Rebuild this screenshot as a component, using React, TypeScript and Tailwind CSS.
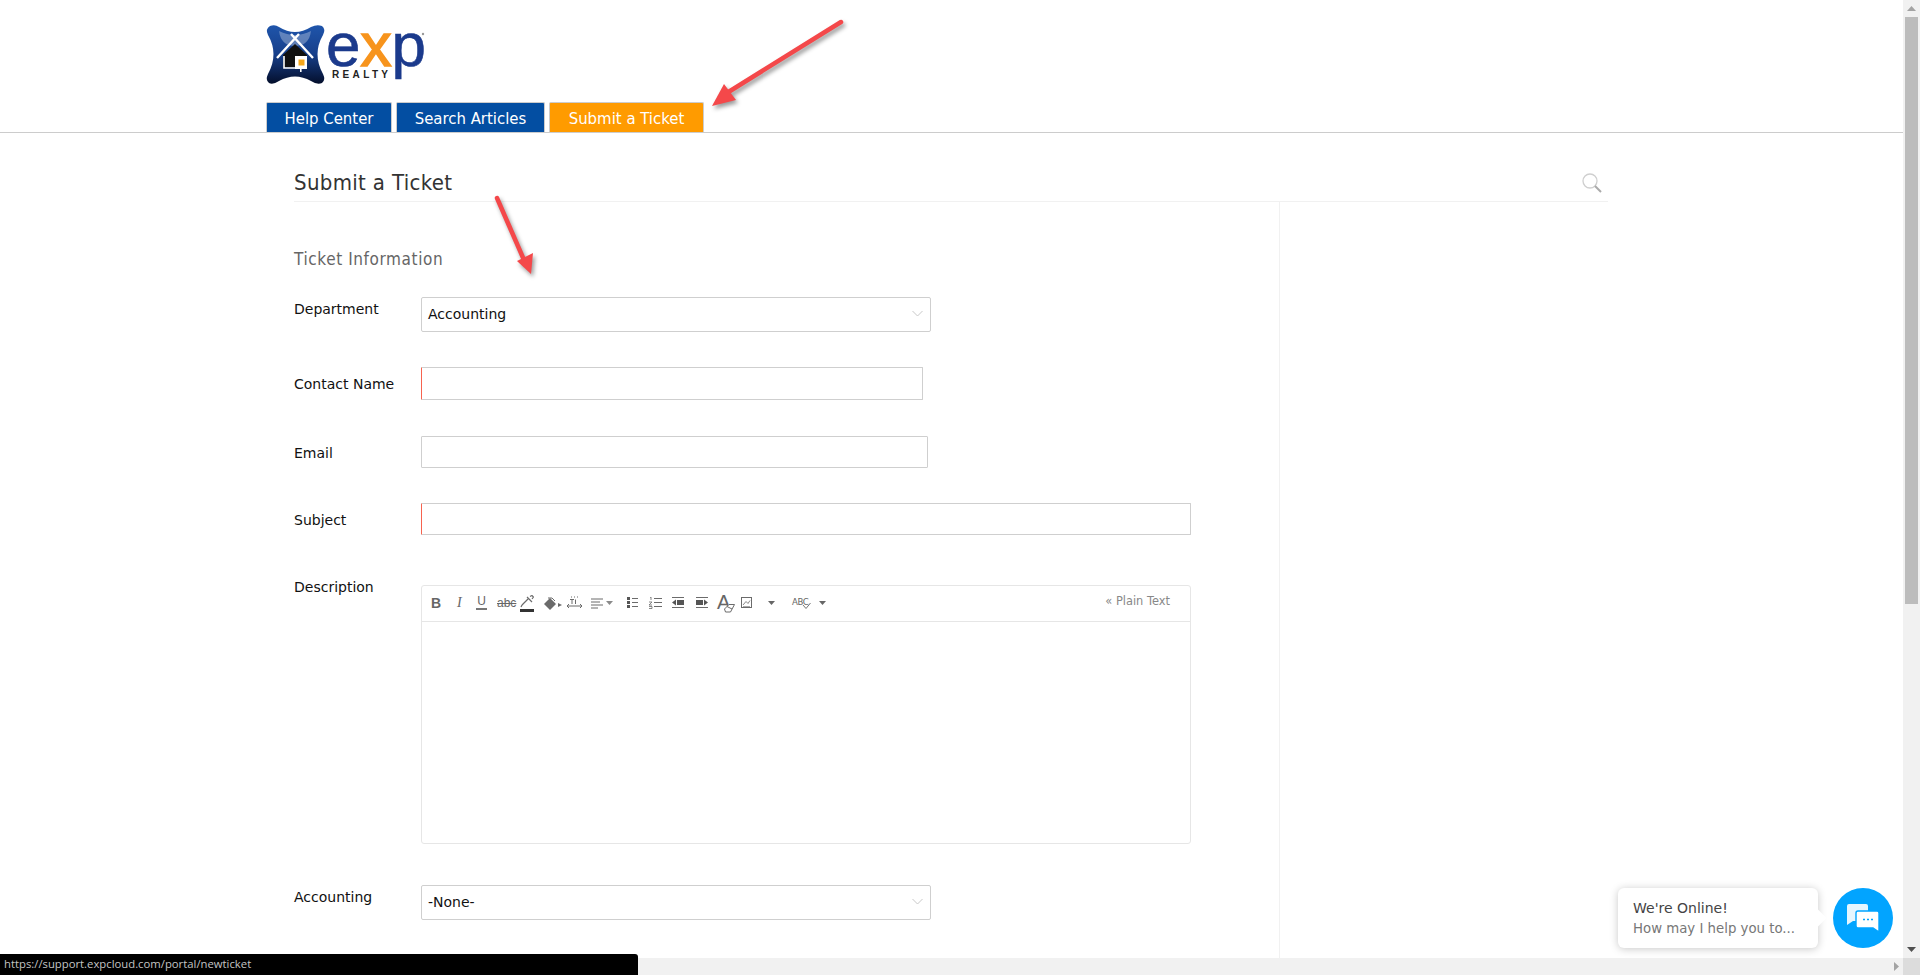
import React from "react";

const sans = "font-['DejaVu_Sans',Verdana,sans-serif]";
const cond = "font-['DejaVu_Sans_Condensed','DejaVu_Sans',sans-serif]";

function Logo() {
  return (
    <svg width="162" height="62" viewBox="0 0 162 62" className="block overflow-visible">
      <defs>
        <linearGradient id="lg" x1="0" y1="0" x2="0" y2="1">
          <stop offset="0" stopColor="#1f55ab" />
          <stop offset="0.5" stopColor="#173f8a" />
          <stop offset="1" stopColor="#040f2c" />
        </linearGradient>
      </defs>
      <path
        d="M5 2Q10 0 14 3Q30 13 46 3Q52 0 57 2Q61 5 58 11Q47 30 58 50Q61 56 57 59Q52 61 46 57Q30 48 14 57Q8 61 4 59Q0 56 3 50Q14 30 3 11Q0 5 5 2Z"
        fill="url(#lg)"
      />
      <path d="M14 7Q30 15 46 7Q44 22 30 22Q16 22 14 7Z" fill="#fff" opacity="0.3" />
      <path d="M18 31L30 20L42 31V43H18Z" fill="#111" />
      <path d="M12 34L34 10M48 34L26 10" stroke="#fff" strokeWidth="2.4" fill="none" />
      <path d="M19 32V44H41V32" stroke="#fff" strokeWidth="1.6" fill="none" />
      <rect x="30" y="32" width="12" height="13" fill="#fff" />
      <rect x="33.5" y="35.5" width="6" height="6" fill="#f5a71c" />
      <rect x="35" y="44" width="1.6" height="4" fill="#fff" />
      <text
        x="61"
        y="42"
        fontSize="62"
        fontFamily="'Liberation Sans',sans-serif"
        fill="#1b3a8c"
        stroke="#1b3a8c"
        strokeWidth="0.6"
      >
        e<tspan fill="#f7941d" stroke="#f7941d" strokeWidth="1.6">x</tspan>p
      </text>
      <text
        x="67"
        y="54"
        fontSize="10"
        fontWeight="700"
        fontFamily="'Liberation Sans',sans-serif"
        fill="#222"
        textLength="56"
        lengthAdjust="spacing"
      >
        REALTY
      </text>
      <circle cx="158" cy="10" r="1.2" fill="#999" />
    </svg>
  );
}

function Tab({ label, w, active }: { label: string; w: string; active?: boolean }) {
  return (
    <div
      className={`${w} h-[30px] pt-[3px] border border-b-0 border-[#ccc] rounded-t-[2px] flex items-center justify-center text-white text-[16.6px] ${cond} ${
        active ? "bg-[#ff9b00]" : "bg-[#034ea2]"
      }`}
    >
      {label}
    </div>
  );
}

function Chevron() {
  return (
    <svg width="11" height="7" viewBox="0 0 11 7" fill="none" className="mr-[6px] mb-[2px]">
      <path d="M.5 1L5.5 6L10.5 1" stroke="#c8c8c8" strokeWidth="1" />
    </svg>
  );
}

function SelectBox({ value, w }: { value: string; w: string }) {
  return (
    <div
      className={`${w} h-[35px] border border-[#cfcfcf] rounded-[2px] flex items-center justify-between pl-[6px] pr-[1px] text-[14px] text-[#111]`}
    >
      <span>{value}</span>
      <Chevron />
    </div>
  );
}

function TextBox({ w, h, required }: { w: string; h: string; required?: boolean }) {
  return (
    <input
      type="text"
      className={`${w} ${h} block border border-[#cfcfcf] rounded-[1px] bg-white ${required ? "border-l-[#f7634f]" : ""}`}
    />
  );
}

function Row({ label, pad, mt, children }: { label: string; pad: string; mt: string; children: React.ReactNode }) {
  return (
    <div className={`flex ${mt}`}>
      <div className={`w-[127px] shrink-0 ${pad} text-[14px] leading-[16px] text-[#111]`}>{label}</div>
      {children}
    </div>
  );
}

const ic = "#6b6b6b";

function Toolbar() {
  return (
    <div className="h-[36px] border-b border-[#e6e6e6] flex items-center pl-[9px] pb-[2px] shrink-0">
      <span className="w-[9px] text-[14px] leading-none font-bold text-[#666] font-['Liberation_Sans',sans-serif]">B</span>
      <span className="ml-[17px] w-[7px] text-[14px] leading-none italic text-[#666] font-['Liberation_Serif',serif]">I</span>
      <span className="ml-[12px] w-[11px] text-center text-[12px] leading-[13px] border-b-2 border-[#777] text-[#666] font-['Liberation_Sans',sans-serif] mb-[1px]">U</span>
      <span className="ml-[10px] w-[18px] text-center text-[12px] leading-none line-through text-[#666] font-['Liberation_Sans',sans-serif]">abc</span>
      <svg className="ml-[5px] mt-[2px]" width="14" height="17" viewBox="0 0 14 17" fill="none">
        <path d="M2 10L8 4M7 2L12 7M10 1.5L12 .5L13.5 2L12 4M2 10L1 12" stroke={ic} strokeWidth="1.2" />
        <rect x="0" y="14" width="14" height="3" fill="#333" />
      </svg>
      <svg className="ml-[9px] mt-[3px]" width="19" height="14" viewBox="0 0 19 14">
        <path d="M7 1L13 7L7 13L1 7Z" fill={ic} />
        <path d="M5 1L9 1L12 4" stroke={ic} fill="none" />
        <path d="M15 6L19 8L15 10Z" fill={ic} />
      </svg>
      <svg className="ml-[4px]" width="17" height="13" viewBox="0 0 17 13" fill="none">
        <path d="M1 10H16M3 8L1 10L3 12M14 8L16 10L14 12" stroke={ic} />
        <path d="M4 3.5H8M6 3.5V8M9.5 3.5V8M5 1H6M8 1H9M11 1H12" stroke={ic} />
      </svg>
      <svg className="ml-[8px] mt-[2px]" width="22" height="11" viewBox="0 0 22 11" fill="none">
        <path d="M0 1H12M0 4H9M0 7H12M0 10H7" stroke={ic} />
        <path d="M15 3H22L18.5 7Z" fill="#8a8a8a" />
      </svg>
      <svg className="ml-[14px]" width="11" height="11" viewBox="0 0 11 11" fill="none">
        <path d="M0 1.5H3M0 5.5H3M0 9.5H3" stroke="#555" strokeWidth="3" />
        <path d="M5 1.5H11M5 5.5H11M5 9.5H11" stroke={ic} />
      </svg>
      <svg className="ml-[11px]" width="13" height="12" viewBox="0 0 13 12" fill="none">
        <path d="M1 .5L2 0V3M0 5H3L0 8H3M0 9.5H3V11.5H0" stroke={ic} strokeWidth=".8" />
        <path d="M5 1.5H13M5 5.5H13M5 9.5H13" stroke={ic} />
      </svg>
      <svg className="ml-[10px]" width="12" height="11" viewBox="0 0 12 11">
        <path d="M0 .5H12M0 10.5H12" stroke={ic} />
        <rect x="5" y="3" width="7" height="5" fill="#555" />
        <path d="M4 2.5V8.5L0 5.5Z" fill="#555" />
      </svg>
      <svg className="ml-[12px]" width="12" height="11" viewBox="0 0 12 11">
        <path d="M0 .5H12M0 10.5H12" stroke={ic} />
        <rect x="0" y="3" width="7" height="5" fill="#555" />
        <path d="M8 2.5V8.5L12 5.5Z" fill="#555" />
      </svg>
      <span className="ml-[9px] w-[18px] h-[19px] relative mt-[1px]">
        <span className="absolute left-0 top-[-2px] text-[20px] leading-none text-[#666] font-['Liberation_Sans',sans-serif]">A</span>
        <svg className="absolute right-0 bottom-0" width="11" height="10" viewBox="0 0 11 10" fill="none">
          <path d="M.5 6L5 1.5H10.5L6.5 9H1.5Z" fill="#fff" stroke={ic} />
          <path d="M3 3.5L8 6" stroke={ic} />
        </svg>
      </span>
      <svg className="ml-[6px]" width="11" height="11" viewBox="0 0 11 11" fill="none">
        <rect x=".5" y=".5" width="10" height="10" stroke={ic} />
        <path d="M2 8L5 4.5L7 6.5L9 3.5" stroke={ic} strokeWidth=".8" />
        <path d="M2 9.5H9" stroke="#aaa" />
      </svg>
      <svg className="ml-[16px]" width="7" height="4" viewBox="0 0 7 4">
        <path d="M0 0H7L3.5 4Z" fill="#666" />
      </svg>
      <span className="ml-[17px] w-[21px] h-[14px] relative">
        <span className="absolute left-0 top-[1px] text-[9.5px] leading-none text-[#666] tracking-[-0.4px] font-['DejaVu_Sans_Condensed','DejaVu_Sans',sans-serif]">ABC</span>
        <svg className="absolute left-[10px] top-[6px]" width="9" height="8" viewBox="0 0 9 8" fill="none">
          <path d="M1 3L4 6.5L8.5 1" stroke="#777" />
        </svg>
      </span>
      <svg className="ml-[6px]" width="7" height="4" viewBox="0 0 7 4">
        <path d="M0 0H7L3.5 4Z" fill="#666" />
      </svg>
      <span className="ml-auto mr-[20px] mb-[1px] text-[11.4px] leading-none text-[#888]">« Plain Text</span>
    </div>
  );
}

function ScrollArrow({ d, w, h, c = "#666" }: { d: string; w: number; h: number; c?: string }) {
  return (
    <svg width={w} height={h} viewBox={`0 0 ${w} ${h}`}>
      <path d={d} fill={c} />
    </svg>
  );
}

function Arrows() {
  return (
    <svg className="absolute left-0 top-0 pointer-events-none drop-shadow-[2px_3px_2px_rgba(0,0,0,0.4)]" width="900" height="300" viewBox="0 0 900 300" fill="none">
      <path d="M841 22L722 96" stroke="#f4484a" strokeWidth="4.5" strokeLinecap="round" />
      <path d="M712 106L724 84L736 100Z" fill="#f4484a" />
      <path d="M497 198L524 260" stroke="#f4484a" strokeWidth="4.5" strokeLinecap="round" />
      <path d="M531 274L517 261L533 253Z" fill="#f4484a" />
    </svg>
  );
}

function Chat() {
  return (
    <div className="absolute left-[1618px] top-[888px] flex items-center gap-[15px]">
      <div className="relative w-[200px] h-[60px] bg-white rounded-[6px] shadow-[0_1px_8px_rgba(0,0,0,0.22)] pl-[15px] flex flex-col">
        <div className="absolute right-[-6px] top-[24px] w-[12px] h-[12px] bg-white rotate-45" />
        <span className="mt-[11px] text-[14px] leading-[18px] text-[#444]">We're Online!</span>
        <span className="mt-[3px] text-[13.3px] leading-[18px] text-[#777]">How may I help you to...</span>
      </div>
      <div className="w-[60px] h-[60px] rounded-full bg-[#02a4ff] flex items-center justify-center">
        <svg width="32" height="28" viewBox="0 0 32 28">
          <path d="M2 0H19Q21 0 21 2V17H6L0 21V2Q0 0 2 0Z" fill="#fff" opacity="0.9" />
          <path d="M11 7H30Q32 7 32 9V23V28L26 24H11Q9 24 9 22V9Q9 7 11 7Z" fill="#fff" stroke="#02a4ff" strokeWidth="1.4" />
          <path d="M16 15.5H18M20 15.5H22M24 15.5H26" stroke="#02a4ff" strokeWidth="1.4" />
        </svg>
      </div>
    </div>
  );
}

export default function App() {
  return (
    <div className={`relative w-full h-[975px] overflow-hidden bg-white flex ${sans}`}>
      <div className="flex-1 min-w-0 flex flex-col">
        <div className="flex-1 min-h-0 overflow-hidden flex flex-col">
          <header className="h-[133px] shrink-0 border-b border-[#ccc] pl-[266px] flex flex-col">
            <div className="mt-[24px] -ml-[1px]">
              <Logo />
            </div>
            <nav className="mt-auto flex gap-[4px]">
              <Tab label="Help Center" w="w-[126px]" />
              <Tab label="Search Articles" w="w-[149px]" />
              <Tab label="Submit a Ticket" w="w-[155px]" active />
            </nav>
          </header>

          <div className="ml-[294px] w-[1314px] h-[69px] shrink-0 border-b border-[#f1f1f1] flex items-end justify-between pb-[5px]">
            <h1 className={`text-[22px] leading-[26px] tracking-[0.33px] text-[#333] ${cond}`}>Submit a Ticket</h1>
            <svg className="mr-[6px] mb-[3px]" width="20" height="20" viewBox="0 0 20 20" fill="none">
              <circle cx="8" cy="8" r="7" stroke="#cfcfcf" strokeWidth="1.3" />
              <path d="M13 13L19 19" stroke="#aaa" strokeWidth="2" />
            </svg>
          </div>

          <div className="ml-[294px] w-[1314px] flex-1 min-h-0 flex">
            <main className="w-[986px] border-r border-[#f1f1f1] shrink-0">
              <h2 className={`mt-[47px] text-[17px] leading-[20px] tracking-[0.6px] text-[#666] ${cond}`}>Ticket Information</h2>
              <Row label="Department" pad="pt-[4px]" mt="mt-[28px]">
                <SelectBox value="Accounting" w="w-[510px]" />
              </Row>
              <Row label="Contact Name" pad="pt-[9px]" mt="mt-[35px]">
                <TextBox w="w-[502px]" h="h-[33px]" required />
              </Row>
              <Row label="Email" pad="pt-[9px]" mt="mt-[36px]">
                <TextBox w="w-[507px]" h="h-[32px]" />
              </Row>
              <Row label="Subject" pad="pt-[9px]" mt="mt-[35px]">
                <TextBox w="w-[770px]" h="h-[32px]" required />
              </Row>
              <Row label="Description" pad="-mt-[6px]" mt="mt-[50px]">
                <div className="w-[770px] h-[259px] border border-[#e6e6e6] rounded-[3px] flex flex-col">
                  <Toolbar />
                </div>
              </Row>
              <Row label="Accounting" pad="pt-[4px]" mt="mt-[41px]">
                <SelectBox value="-None-" w="w-[510px]" />
              </Row>
            </main>
          </div>
        </div>
        <div className="h-[17px] shrink-0 bg-[#f1f1f1] flex items-center justify-end pr-[4px]">
          <ScrollArrow d="M0 0L5 4.5L0 9Z" w={5} h={9} c="#a3a3a3" />
        </div>
      </div>

      <aside className="w-[17px] shrink-0 flex flex-col bg-[#f1f1f1]">
        <div className="h-[17px] flex items-center justify-center">
          <ScrollArrow d="M4.5 0L9 5H0Z" w={9} h={5} c="#a3a3a3" />
        </div>
        <div className="mx-[2px] h-[587px] bg-[#bcbcbc]" />
        <div className="flex-1" />
        <div className="h-[17px] flex items-center justify-center">
          <ScrollArrow d="M0 0H9L4.5 5Z" w={9} h={5} c="#505050" />
        </div>
        <div className="h-[17px] bg-[#dcdcdc]" />
      </aside>

      <Arrows />
      <Chat />

      <div className="absolute left-0 bottom-0 w-[638px] h-[21px] bg-black rounded-tr-[3px] flex items-center pl-[4px] text-[11.3px] text-[#c4c4c4] font-['Open_Sans',sans-serif]">
        https://support.expcloud.com/portal/newticket
      </div>
    </div>
  );
}
